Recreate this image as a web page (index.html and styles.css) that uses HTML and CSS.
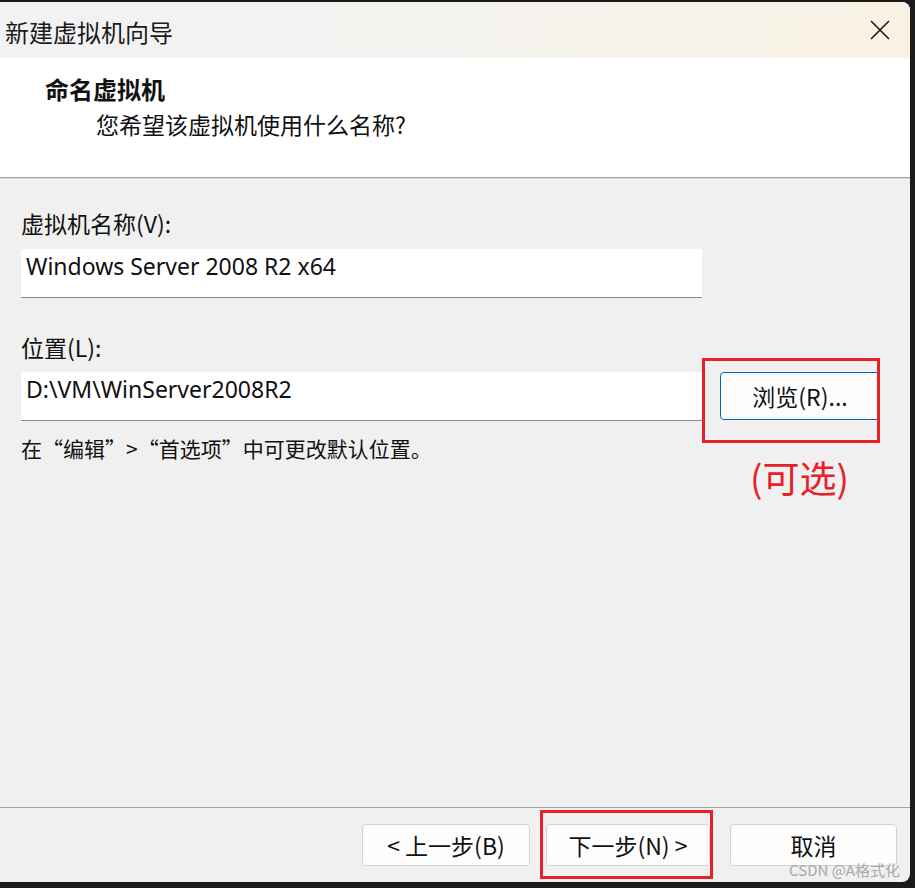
FILE: index.html
```html
<!DOCTYPE html>
<html lang="zh-CN">
<head>
<meta charset="utf-8">
<title>新建虚拟机向导</title>
<link rel="stylesheet" href="styles.css">
</head>
<body>
<div class="window">
  <div class="titlebar">
    <span class="title">新建虚拟机向导</span>
    <svg class="close" width="22" height="22" viewBox="0 0 22 22"><path d="M2 2 L20 20 M20 2 L2 20" stroke="#1a1a1a" stroke-width="1.6" fill="none"/></svg>
  </div>
  <div class="header">
    <div class="h-title">命名虚拟机</div>
    <div class="h-sub">您希望该虚拟机使用什么名称?</div>
  </div>
  <div class="content">
    <div class="label">虚拟机名称(V):</div>
    <div class="field name-field">Windows Server 2008 R2 x64</div>
    <div class="label loc-label">位置(L):</div>
    <div class="loc-row">
      <div class="field">D:\VM\WinServer2008R2</div>
      <div class="browse">浏览(R)...</div>
    </div>
    <div class="hint">在“编辑”>“首选项”中可更改默认位置。</div>
    <div class="mark mark-browse"></div>
    <div class="optional">(可选)</div>
  </div>
  <div class="footer">
    <div class="btn btn-back">&lt; 上一步(B)</div>
    <div class="btn btn-next">下一步(N) &gt;</div>
    <div class="btn btn-cancel">取消</div>
    <div class="mark mark-next"></div>
    <div class="watermark">CSDN @A格式化</div>
  </div>
</div>
</body>
</html>
```

FILE: styles.css
```css
html, body {
  margin: 0;
  padding: 0;
}
body {
  background: #1c1c1c;
  width: 915px;
  height: 888px;
  overflow: hidden;
  font-family: "Noto Sans", "Noto Sans CJK SC", sans-serif;
  color: #111;
}
.window {
  margin-top: 2px;
  width: 910px;
  height: 880px;
  border-radius: 0 8px 8px 0;
  overflow: hidden;
  background: #f0f0f0;
  display: flex;
  flex-direction: column;
}
.titlebar {
  height: 56px;
  flex: none;
  display: flex;
  align-items: center;
  justify-content: space-between;
  background: linear-gradient(90deg, #f1f2f4 0%, #f4f2ee 50%, #f9f2e4 100%);
  padding: 0 19px 0 5px;
}
.title {
  font-family: "Noto Sans CJK SC", sans-serif;
  font-size: 24px;
  color: #1a1a1a;
  margin-top: 2px;
}
.close {
  display: block;
}
.header {
  height: 120px;
  flex: none;
  background: #ffffff;
  border-bottom: 1px solid #a0a0a0;
  box-sizing: border-box;
  font-family: "Noto Sans CJK SC", sans-serif;
}
.h-title {
  font-size: 24px;
  font-weight: bold;
  padding: 15px 0 0 45px;
  line-height: 32px;
}
.h-sub {
  font-size: 23px;
  padding-left: 96px;
  line-height: 32px;
  margin-top: 3px;
}
.content {
  flex: 1;
  position: relative;
  padding: 29px 0 0 21px;
  border-top: 1px solid #dcdcdc;
}
.label {
  font-family: "Noto Sans CJK SC", sans-serif;
  font-size: 23px;
  line-height: 30px;
  height: 30px;
}
.field {
  width: 681px;
  height: 49px;
  box-sizing: border-box;
  background: #ffffff;
  border-bottom: 1px solid #8a8a8a;
  font-size: 23px;
  line-height: 30px;
  padding: 2px 0 0 5px;
  margin-top: 11px;
}
.loc-label {
  margin-top: 34px;
}
.loc-row {
  display: flex;
  align-items: flex-start;
  margin-top: 10px;
}
.loc-row .field {
  margin-top: 0;
}
.browse {
  margin-left: 18px;
  width: 160px;
  height: 48px;
  box-sizing: border-box;
  border: 1px solid #0067c0;
  border-radius: 4px;
  background: #fdfdfd;
  display: flex;
  align-items: center;
  justify-content: center;
  font-family: "Noto Sans CJK SC", sans-serif;
  font-size: 23px;
}
.hint {
  font-family: "Noto Sans CJK SC", sans-serif;
  font-size: 21px;
  line-height: 30px;
  margin-top: 12px;
}
.mark {
  position: absolute;
  border: 3px solid #e8202a;
  box-sizing: border-box;
}
.mark-browse {
  left: 702px;
  top: 179px;
  width: 178px;
  height: 85px;
}
.optional {
  position: absolute;
  left: 750px;
  top: 274px;
  font-family: "Noto Sans CJK SC", sans-serif;
  font-size: 37px;
  line-height: 48px;
  color: #e8202a;
}
.footer {
  height: 75px;
  flex: none;
  position: relative;
  border-top: 1px solid #a0a0a0;
  box-sizing: border-box;
  display: flex;
  align-items: flex-start;
  padding: 16px 13px 0 0;
  justify-content: flex-end;
}
.btn {
  height: 42px;
  box-sizing: border-box;
  border: 1px solid #d2d2d2;
  border-radius: 4px;
  background: #fdfdfd;
  display: flex;
  align-items: center;
  justify-content: center;
  font-family: "Noto Sans CJK SC", sans-serif;
  font-size: 23px;
}
.btn-back {
  width: 168px;
}
.btn-next {
  width: 164px;
  margin-left: 16px;
}
.btn-cancel {
  width: 167px;
  margin-left: 20px;
}
.mark-next {
  left: 540px;
  top: 2px;
  width: 173px;
  height: 69px;
}
.watermark {
  position: absolute;
  right: 10px;
  top: 53px;
  font-family: "Noto Sans CJK SC", sans-serif;
  font-size: 15px;
  color: #a8a8a8;
  line-height: 18px;
}
```
